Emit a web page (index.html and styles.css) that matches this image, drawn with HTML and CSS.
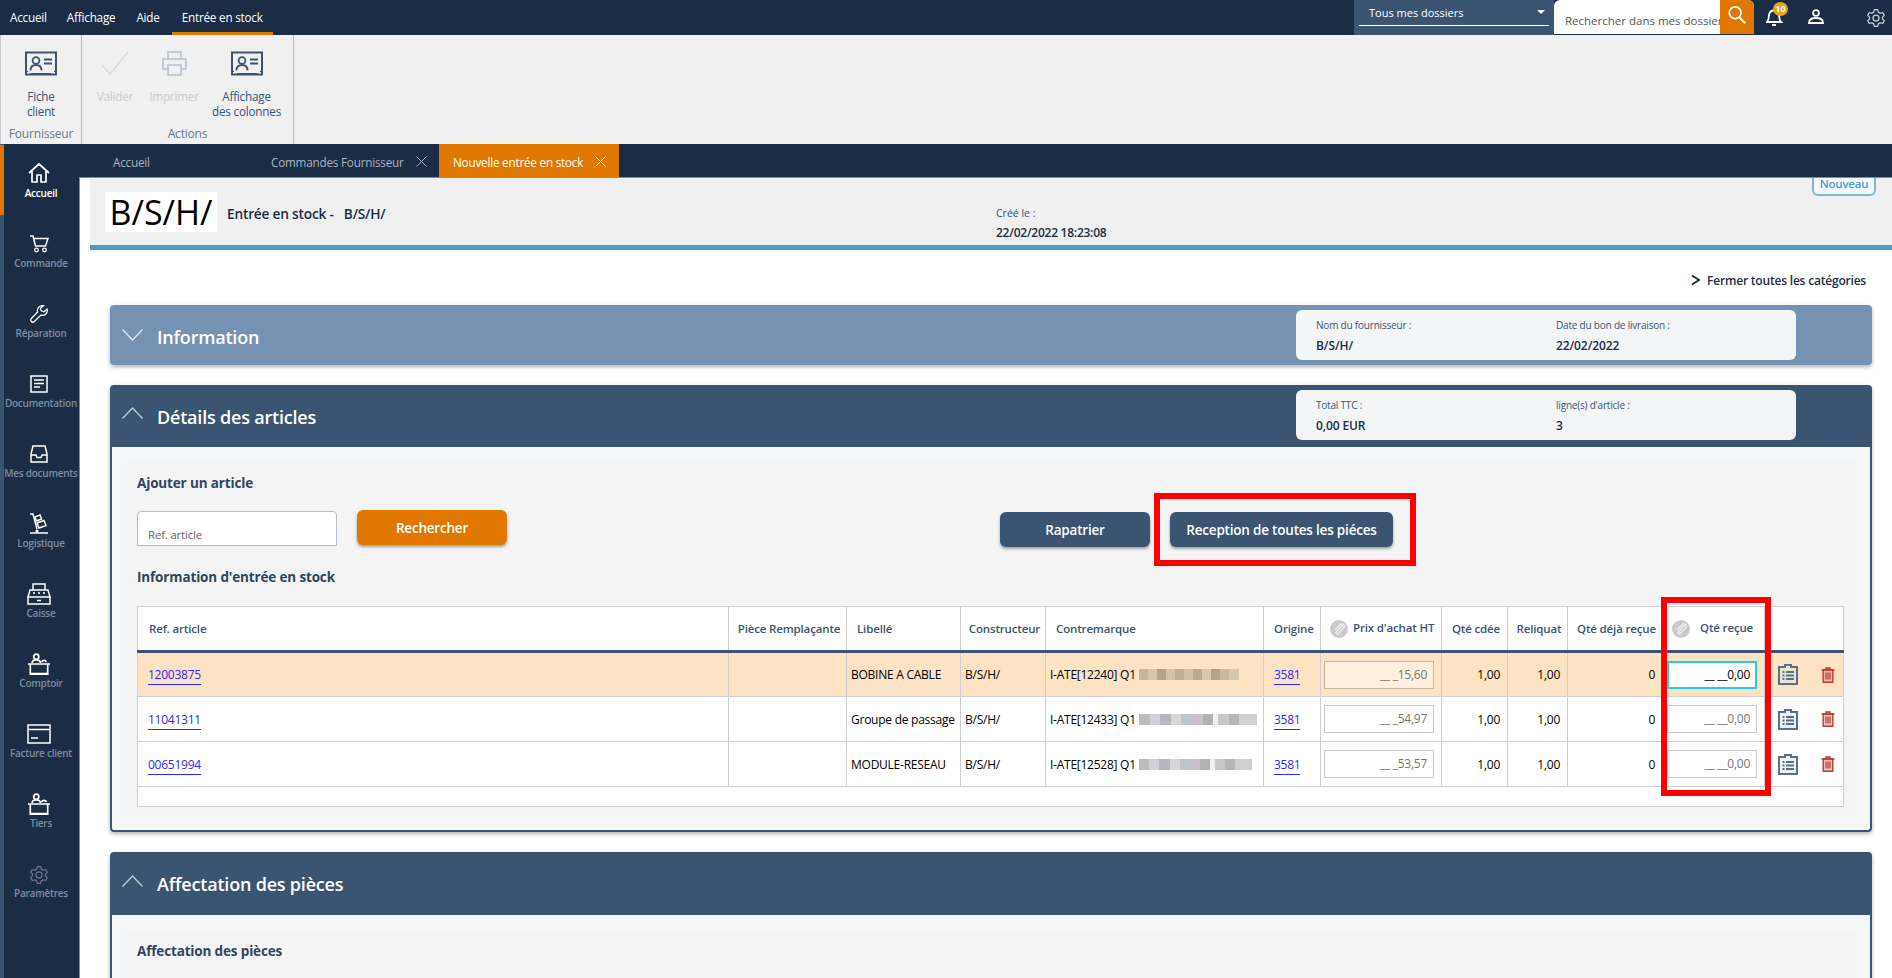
FILE: index.html
```html
<!DOCTYPE html>
<html lang="fr">
<head>
<meta charset="utf-8">
<title>Nouvelle entrée en stock</title>
<link rel="stylesheet" href="styles.css">
</head>
<body>
<svg class="defs" width="0" height="0" aria-hidden="true">
  <symbol id="i-card" viewBox="0 0 32 24"><rect x="1" y="1" width="30" height="22" fill="none" stroke="currentColor" stroke-width="2"/><circle cx="11" cy="9" r="3.4" fill="none" stroke="currentColor" stroke-width="1.8"/><path d="M5.500 19c0-4 2.500-5.500 5.500-5.500s5.500 1.500 5.500 5.500M19 8h8M19 12h8" fill="none" stroke="currentColor" stroke-width="1.800"/><path d="M1 20h2M29 20h2M6 22h20" stroke="currentColor" stroke-width="1"/></symbol>
  <symbol id="i-gear" viewBox="0 0 24 24"><path d="M10 2h4l.7 3 2.300 1.300 3-.9 2 3.500-2.200 2.100v2l2.200 2.100-2 3.500-3-.9-2.300 1.300-.7 3h-4l-.7-3L7 17.700l-3 .9-2-3.500L4.200 13v-2L2 8.900l2-3.500 3 .9L9.300 5z" fill="none" stroke="currentColor" stroke-width="1.500" stroke-linejoin="round"/><circle cx="12" cy="12" r="3.600" fill="none" stroke="currentColor" stroke-width="1.500"/></symbol>
  <symbol id="i-desk" viewBox="0 0 24 24"><circle cx="9" cy="4" r="2.800" fill="none" stroke="currentColor" stroke-width="1.800"/><path d="M4.500 11c0-2.500 2-3.500 4.500-3.500s4.500 1 4.500 3.500M15 10c.3-1.500 1.300-2 2.500-2s2.200.5 2.500 2" fill="none" stroke="currentColor" stroke-width="1.800"/><path d="M0 12h24M2.500 12v11h19V12M2.500 22.500h19" fill="none" stroke="currentColor" stroke-width="1.800"/></symbol>
  <symbol id="i-clip" viewBox="0 0 20 21"><path d="M7 3V1h6v2h6v17H1V3z" fill="#dde3ea" fill-opacity=".55" stroke="currentColor" stroke-width="2"/><path d="M4.500 8h2M8 8h8M4.500 11.500h2M8 11.500h8M4.500 15h2M8 15h8" stroke="currentColor" stroke-width="1.800"/></symbol>
  <symbol id="i-trash" viewBox="0 0 14 16"><path d="M.5 3h13M5 3V1h4v2" fill="none" stroke="currentColor" stroke-width="1.400"/><path d="M2.200 3h9.600v12.300H2.200z" fill="#e0a08f" fill-opacity=".6" stroke="currentColor" stroke-width="1.400"/><path d="M5 5.500v7M7 5.500v7M9 5.500v7" stroke="currentColor" stroke-width="1.200"/></symbol>
  <symbol id="i-paperclip" viewBox="0 0 18 18"><circle cx="9" cy="9" r="9" fill="#c9c9c9"/><path d="M12.500 5.500 6.500 11.800a1.300 1.300 0 0 0 1.900 1.800l5.100-5.500a2.400 2.400 0 0 0-3.400-3.400L5 10" fill="none" stroke="#f2f2f2" stroke-width="1.300"/></symbol>
</svg>

<header class="menubar">
  <nav class="menu">
    <span class="menu-item">Accueil</span>
    <span class="menu-item">Affichage</span>
    <span class="menu-item menu-aide">Aide</span>
    <span class="menu-item menu-active">Entrée en stock</span>
  </nav>
  <div class="top-tools">
    <div class="folder-select"><span class="folder-line"><span>Tous mes dossiers</span><i class="caret"></i></span></div>
    <div class="search"><span class="search-text">Rechercher dans mes dossiers</span><span class="search-btn"><svg width="20" height="20" viewBox="0 0 22 22"><circle cx="9" cy="8.500" r="6.500" fill="none" stroke="#fff" stroke-width="2"/><path d="M13.500 13.500 20 20" stroke="#fff" stroke-width="2.400"/></svg></span></div>
    <span class="tool tool-bell"><svg width="18" height="19" viewBox="0 0 18 19"><path d="M1 15c2-2 1.500-4 2-7 .5-3 2.500-4.500 5-4.500s4.500 1.500 5 4.500c.5 3 0 5 2 7z" fill="none" stroke="#fff" stroke-width="1.800"/><path d="M6 18h4" stroke="#fff" stroke-width="1.800"/></svg><b class="badge">10</b></span>
    <span class="tool tool-user"><svg width="16" height="15" viewBox="0 0 16 15"><circle cx="8" cy="4" r="2.900" fill="none" stroke="#fff" stroke-width="1.800"/><path d="M1 14c0-3.500 3-5 7-5s7 1.500 7 5z" fill="none" stroke="#fff" stroke-width="1.800"/></svg></span>
    <span class="tool tool-gear"><svg width="20" height="20"><use href="#i-gear"/></svg></span>
  </div>
</header>

<section class="ribbon">
  <div class="rib-group rib-g1">
    <div class="rib-buttons">
      <div class="rib-btn"><svg class="rib-icon" width="32" height="25"><use href="#i-card"/></svg><span>Fiche<br>client</span></div>
    </div>
    <div class="rib-name">Fournisseur</div>
  </div>
  <div class="rib-group rib-g2">
    <div class="rib-buttons">
      <div class="rib-btn rib-off rib-b-valider"><svg class="rib-icon" width="28" height="25" viewBox="0 0 28 25"><path d="M1 14l8 9L27 1" fill="none" stroke="#cfe0cf" stroke-width="1.600"/></svg><span>Valider</span></div>
      <div class="rib-btn rib-off rib-b-imprimer"><svg class="rib-icon" width="25" height="25" viewBox="0 0 25 25"><path d="M6 8V1h13v7M6 18H1V8h23v10h-5M6 14h13v10H6z" fill="none" stroke="#c3ccd6" stroke-width="2"/></svg><span>Imprimer</span></div>
      <div class="rib-btn rib-b-aff"><svg class="rib-icon" width="32" height="25"><use href="#i-card"/></svg><span>Affichage<br>des colonnes</span></div>
    </div>
    <div class="rib-name">Actions</div>
  </div>
</section>

<div class="app">
  <aside class="side">
    <div class="side-item side-active"><svg width="22" height="20" viewBox="0 0 22 20"><path d="M1 10 11 1l10 9M4 8v11h5v-7h4v7h5V8" fill="none" stroke="#fff" stroke-width="1.700" stroke-linejoin="round"/></svg><span>Accueil</span></div>
    <div class="side-item"><svg width="20" height="18" viewBox="0 0 20 18"><path d="M1 1h3l2.500 10h10L19 3.500H5" fill="none" stroke="#fff" stroke-width="1.500"/><circle cx="7.500" cy="15" r="1.800" fill="none" stroke="#fff" stroke-width="1.300"/><circle cx="15.500" cy="15" r="1.800" fill="none" stroke="#fff" stroke-width="1.300"/></svg><span>Commande</span></div>
    <div class="side-item"><svg width="18" height="20" viewBox="0 0 20 20"><path d="M19 4.500 15.500 7.500l-3-1-1-3L15 .8a5.500 5.500 0 0 0-6.500 7L1.500 15a2.300 2.300 0 0 0 3.300 3.300l7.300-7a5.500 5.500 0 0 0 6.900-6.800z" fill="none" stroke="#fff" stroke-width="1.400"/></svg><span>Réparation</span></div>
    <div class="side-item"><svg width="18" height="18" viewBox="0 0 18 18"><rect x="1" y="1" width="16" height="16" fill="none" stroke="#fff" stroke-width="1.500"/><path d="M4 5h10M4 8.500h10M4 12h6" stroke="#fff" stroke-width="1.500"/></svg><span>Documentation</span></div>
    <div class="side-item"><svg width="18" height="18" viewBox="0 0 18 18"><path d="M3 1h12l2 8v8H1V9zM1 10h5l1 2.500h4l1-2.500h5" fill="none" stroke="#fff" stroke-width="1.500"/></svg><span>Mes documents</span></div>
    <div class="side-item"><svg width="20" height="22" viewBox="0 0 20 22"><path d="M1 1h3l4 15M1 20h18" fill="none" stroke="#fff" stroke-width="1.500"/><path d="M6 4l5-2 1.500 4-5 2zM8 10l7-2.500 2 5-7 2.500z" fill="none" stroke="#fff" stroke-width="1.500"/><circle cx="8" cy="18" r="1.500" fill="#fff"/></svg><span>Logistique</span></div>
    <div class="side-item side-tight"><svg width="24" height="22" viewBox="0 0 24 22"><path d="M6 7V1h12v6M3 7h18l2 7H1zM1 14h22v7H1zM6 10h2M11 10h2M16 10h2M10 17.500h4" fill="none" stroke="#fff" stroke-width="1.500"/></svg><span>Caisse</span></div>
    <div class="side-item side-tight"><svg width="24" height="24"><use href="#i-desk"/></svg><span>Comptoir</span></div>
    <div class="side-item side-tight"><svg width="24" height="20" viewBox="0 0 24 20"><rect x="1" y="1" width="22" height="18" fill="none" stroke="#fff" stroke-width="1.500"/><path d="M1 5.500h22M4 14h7" stroke="#fff" stroke-width="1.700"/></svg><span>Facture client</span></div>
    <div class="side-item side-tight"><svg width="24" height="24"><use href="#i-desk"/></svg><span>Tiers</span></div>
    <div class="side-item side-dim"><svg width="20" height="22"><use href="#i-gear"/></svg><span>Paramètres</span></div>
  </aside>

  <div class="workspace">
    <div class="tabs">
      <div class="tab tab-home">Accueil</div>
      <div class="tab tab-cmd">Commandes Fournisseur<svg class="tab-x" width="11" height="11" viewBox="0 0 11 11"><path d="M.5.500l10 10M10.500.500l-10 10" stroke="currentColor"/></svg></div>
      <div class="tab tab-on">Nouvelle entrée en stock<svg class="tab-x" width="11" height="11" viewBox="0 0 11 11"><path d="M.5.500l10 10M10.500.500l-10 10" stroke="currentColor"/></svg></div>
    </div>

    <main class="content">
      <div class="doc-head">
        <div class="logo">B/S/H/</div>
        <div class="doc-title">Entrée en stock -&nbsp;&nbsp; B/S/H/</div>
        <div class="doc-date"><small>Créé le :</small><strong>22/02/2022 18:23:08</strong></div>
        <span class="new-btn">Nouveau</span>
      </div>

      <div class="close-all"><svg width="9" height="10" viewBox="0 0 9 10"><path d="M1 .500 8 5 1 9.500" fill="none" stroke="#1b2d45" stroke-width="1.800"/></svg>Fermer toutes les catégories</div>

      <section class="panel panel-closed">
        <div class="panel-head">
          <svg class="chev" width="21" height="12" viewBox="0 0 21 12"><path d="M.5.500 10.500 11 20.500.500" fill="none" stroke="#dfe6ee" stroke-width="1.300"/></svg>
          <h2>Information</h2>
          <div class="summary">
            <div class="sum-col"><small>Nom du fournisseur :</small><strong>B/S/H/</strong></div>
            <div class="sum-col"><small>Date du bon de livraison :</small><strong>22/02/2022</strong></div>
          </div>
        </div>
      </section>

      <section class="panel">
        <div class="panel-head panel-head-details">
          <svg class="chev chev-up" width="21" height="12" viewBox="0 0 21 12"><path d="M.5 11.500 10.500 1 20.500 11.500" fill="none" stroke="#c3ccd7" stroke-width="1.300"/></svg>
          <h2>Détails des articles</h2>
          <div class="summary">
            <div class="sum-col"><small>Total TTC :</small><strong>0,00 EUR</strong></div>
            <div class="sum-col"><small>ligne(s) d'article :</small><strong>3</strong></div>
          </div>
        </div>
        <div class="panel-body">
          <div class="inner">
            <h3>Ajouter un article</h3>
            <div class="add-row">
              <div class="ref-input">Ref. article</div>
              <button class="btn btn-orange">Rechercher</button>
              <button class="btn btn-blue btn-rap">Rapatrier</button>
              <button class="btn btn-blue btn-rec">Reception de toutes les piéces<span class="redbox redbox-btn"></span></button>
            </div>
            <h3 class="h-stock">Information d'entrée en stock</h3>
            <div class="table-wrap">
              <table class="grid">
                <colgroup><col class="c1"><col class="c2"><col class="c3"><col class="c4"><col class="c5"><col class="c6"><col class="c7"><col class="c8"><col class="c9"><col class="c10"><col class="c11"><col class="c12"></colgroup>
                <thead><tr>
                  <th>Ref. article</th><th>Pièce Remplaçante</th><th>Libellé</th><th>Constructeur</th><th>Contremarque</th><th>Origine</th>
                  <th class="th-i"><svg width="18" height="18"><use href="#i-paperclip"/></svg>Prix d'achat HT</th>
                  <th>Qté cdée</th><th>Reliquat</th><th>Qté déjà reçue</th>
                  <th class="th-i th-q"><svg width="18" height="18"><use href="#i-paperclip"/></svg>Qté reçue</th><th></th>
                </tr></thead>
                <tbody>
                  <tr class="row-on">
                    <td><a>12003875</a></td><td></td><td>BOBINE A CABLE</td><td>B/S/H/</td>
                    <td>I-ATE[12240] Q1 <i class="blur blur1"></i></td><td><a>3581</a></td>
                    <td class="cell-in"><span class="num">__ _15,60</span></td><td class="r">1,00</td><td class="r">1,00</td><td class="r">0</td>
                    <td class="cell-in"><span class="num num-q num-focus">__ __0,00</span></td>
                    <td class="acts"><svg class="clip" width="20" height="21"><use href="#i-clip"/></svg><svg class="trash" width="14" height="16"><use href="#i-trash"/></svg></td>
                  </tr>
                  <tr>
                    <td><a>11041311</a></td><td></td><td>Groupe de passage</td><td>B/S/H/</td>
                    <td>I-ATE[12433] Q1 <i class="blur blur2"></i></td><td><a>3581</a></td>
                    <td class="cell-in"><span class="num">__ _54,97</span></td><td class="r">1,00</td><td class="r">1,00</td><td class="r">0</td>
                    <td class="cell-in"><span class="num num-q">__ __0,00</span></td>
                    <td class="acts"><svg class="clip" width="20" height="21"><use href="#i-clip"/></svg><svg class="trash" width="14" height="16"><use href="#i-trash"/></svg></td>
                  </tr>
                  <tr>
                    <td><a>00651994</a></td><td></td><td>MODULE-RESEAU</td><td>B/S/H/</td>
                    <td>I-ATE[12528] Q1 <i class="blur blur3"></i></td><td><a>3581</a></td>
                    <td class="cell-in"><span class="num">__ _53,57</span></td><td class="r">1,00</td><td class="r">1,00</td><td class="r">0</td>
                    <td class="cell-in"><span class="num num-q">__ __0,00</span></td>
                    <td class="acts"><svg class="clip" width="20" height="21"><use href="#i-clip"/></svg><svg class="trash" width="14" height="16"><use href="#i-trash"/></svg></td>
                  </tr>
                  <tr class="row-empty"><td colspan="12"></td></tr>
                </tbody>
              </table>
              <span class="redbox redbox-col"></span>
            </div>
          </div>
        </div>
      </section>

      <section class="panel panel-last">
        <div class="panel-head">
          <svg class="chev chev-up" width="21" height="12" viewBox="0 0 21 12"><path d="M.5 11.500 10.500 1 20.500 11.500" fill="none" stroke="#c3ccd7" stroke-width="1.300"/></svg>
          <h2>Affectation des pièces</h2>
        </div>
        <div class="panel-body">
          <div class="inner"><h3>Affectation des pièces</h3></div>
        </div>
      </section>
    </main>
  </div>
</div>
</body>
</html>
```
FILE: styles.css
```css
* { box-sizing: border-box; }
html, body { margin: 0; height: 100%; overflow: hidden; }
body { width: 1892px; height: 978px; font-family: "Open Sans", "Noto Sans", sans-serif; font-size: 12px; color: #1b2d45; background: #1b2d45; display: flex; flex-direction: column; }
.defs { position: absolute; }

.menubar { height: 35px; background: #1b2d45; display: flex; justify-content: space-between; color: #fff; flex: none; }
.menu { display: flex; }
.menu-item { padding: 0 10px; line-height: 34px; font-size: 11.700px; letter-spacing: -.2px; }
.menu-aide { margin-left: 1px; }
.menu-active { margin-left: 2px; border-bottom: 3px solid #e07800; height: 35px; }
.top-tools { display: flex; align-items: stretch; }
.folder-select { width: 200px; background: #3a5472; padding: 0 5px; }
.folder-line { display: flex; justify-content: space-between; align-items: center; height: 25.500px; border-bottom: 1px solid #fff; padding: 0 4px 0 10px; font-size: 11px; }
.caret { width: 0; height: 0; border: 4px solid transparent; border-top-color: #fff; margin-top: 4px; }
.search { width: 200px; height: 33.500px; display: flex; background: #fff; border-radius: 6px 6px 0 0; overflow: hidden; }
.search-text { flex: 1; color: #555; font-size: 11.500px; padding: 13px 0 0 11px; overflow: hidden; white-space: nowrap; }
.search-btn { width: 34px; background: #e07800; flex: none; padding: 5px 0 0 7px; }
.tool { position: relative; display: block; }
.tool-bell { margin-left: 12px; width: 42px; padding-top: 7px; }
.tool-user { width: 58px; padding-top: 9px; }
.tool-gear { width: 26px; padding-top: 8px; color: #c9d0d8; }
.badge { position: absolute; left: 7px; top: 2px; width: 15px; height: 14px; border-radius: 50%; background: #e9a21c; color: #fff; font-size: 9px; line-height: 14px; text-align: center; font-weight: 700; }

.ribbon { height: 109px; flex: none; background: #f0f0f0; display: flex; color: #3a5472; }
.rib-group { border-right: 1px solid #bdbdbd; display: flex; flex-direction: column; height: 109px; }
.rib-g1 { width: 82px; border-left: 1px solid #ccc; }
.rib-g2 { width: 212px; }
.rib-buttons { display: flex; flex: 1; }
.rib-btn { display: flex; flex-direction: column; align-items: center; text-align: center; font-size: 11.700px; line-height: 14.500px; flex: 1; padding-top: 16px; letter-spacing: -.2px; }
.rib-icon { margin-bottom: 13px; flex: none; }
.rib-off { color: #c7ced6; }
.rib-b-valider { flex: 0 0 66px; }
.rib-b-imprimer { flex: 0 0 52px; }
.rib-name { font-size: 12px; text-align: center; color: #63788f; height: 24px; line-height: 27px; letter-spacing: -.2px; }

.app { flex: 1; display: flex; min-height: 0; }
.side { width: 79px; flex: none; background: #1b2d45; border-left: 4px solid #3a5472; padding-top: 1px; }
.side-item { height: 70px; margin-left: -4px; padding: 17px 1px 0 0; border-left: 4px solid transparent; display: flex; flex-direction: column; align-items: center; color: #7d8da1; font-size: 10px; font-weight: 600; letter-spacing: -.25px; white-space: nowrap; }
.side-item svg { height: 22px; flex: none; margin: 1px 4px 1px 0; color: #fff; }
.side-active svg { margin: 0 4px 2px 0; }
.side-tight svg { margin: 1px 4px 1px 0; }
.side-active { border-left-color: #e07800; color: #fff; }
.side-dim svg { margin: 2px 4px 0 0; opacity: .55; color: #a9b6c5; }

.workspace { flex: 1; min-width: 0; display: flex; flex-direction: column; }
.tabs { height: 33px; flex: none; display: flex; font-size: 11.700px; letter-spacing: -.2px; color: #aab4c0; padding-top: 2px; }
.tab { display: flex; align-items: center; height: 31px; }
.tab-home { padding-left: 34px; width: 179px; }
.tab-cmd { width: 181px; padding-left: 13px; }
.tab-on { width: 180px; height: 33px; margin-top: -2px; padding-top: 2px; background: #e07800; color: #fff; padding-left: 14px; }
.tab-x { margin-left: 12px; }

.content { flex: 1; min-height: 0; overflow: hidden; background: #fff; border-left: 1px solid #e07800; border-top: 1px solid #e07800; }
.doc-head { margin-left: 10px; height: 72px; background: #f0f0f0; border-bottom: 5px solid #4a9ccb; position: relative; display: flex; padding: 14px 0 0 15px; }
.logo { width: 112px; height: 40px; background: #fff; color: #000; font: 34px/41px "Open Sans", sans-serif; text-align: center; flex: none; }
.doc-title { margin-left: 10px; line-height: 44px; font-size: 13.700px; font-weight: 600; letter-spacing: -.2px; width: 769px; flex: none; }
.doc-date small { display: block; font-size: 10.500px; color: #3a5472; line-height: 12px; margin-top: 15px; }
.doc-date strong { display: block; font-size: 12px; font-weight: 600; line-height: 14px; margin-top: 7px; letter-spacing: -.25px; }
.new-btn { position: absolute; right: 16px; top: -5px; width: 64px; height: 23px; border: 2px solid #7cb8d9; border-radius: 0 0 6px 6px; background: #f4f8fb; color: #4a9ccb; font-size: 11.500px; font-weight: 600; line-height: 17px; text-align: center; letter-spacing: -.2px; }

.close-all { height: 55px; padding: 5px 26px 0 0; display: flex; justify-content: flex-end; align-items: center; gap: 7px; font-size: 12px; font-weight: 600; letter-spacing: -.2px; }

.panel { margin: 0 20px 20px 30px; border-radius: 4px; box-shadow: 0 2px 4px rgba(0,0,0,.3); }
.panel-head { height: 62px; background: #3a5472; display: flex; align-items: center; color: #fff; padding-left: 12px; border-radius: 4px 4px 0 0; position: relative; }
.panel-closed .panel-head { background: #7592b2; height: 60px; border-radius: 4px; }
.panel-closed h2 { padding-top: 3px; }
.panel-head-details h2 { padding-top: 2px; }
.chev { margin-right: 14px; flex: none; }
.chev-up { margin-top: -6px; }
.panel-head h2 { margin: 0; font-size: 18px; font-weight: 600; letter-spacing: -.2px; }
.summary { position: absolute; left: 1186px; top: 5px; width: 500px; height: 50px; background: #f4f5f6; border-radius: 6px; display: flex; padding: 8px 0 0 20px; color: #000; }
.sum-col { width: 244px; }
.sum-col small { display: block; font-size: 10px; color: #3a5472; line-height: 14px; letter-spacing: -.2px; }
.sum-col strong { display: block; font-size: 12px; font-weight: 600; line-height: 14px; margin-top: 7px; color: #1b2d45; letter-spacing: -.1px; }

.panel-body { background: #f5f6f8; border: 2px solid #3a5472; border-top: 0; border-radius: 0 0 4px 4px; padding: 15px 14px 15px 15px; height: 385px; }
.inner { background: #f4f4f4; height: 100%; padding: 12px 10px 0 10px; }
.inner h3 { margin: 0; font-size: 13.500px; font-weight: 700; color: #2e4560; line-height: 18px; letter-spacing: -.15px; }
.add-row { display: flex; align-items: flex-start; margin-top: 18px; height: 42px; }
.ref-input { width: 200px; height: 35px; background: #fff; border: 1px solid #b4bcc8; border-radius: 4px 4px 0 0; color: #666; font-size: 11.500px; padding: 15px 0 0 10px; margin-top: 1px; letter-spacing: -.2px; }
.btn { border: 0; height: 35px; border-radius: 6px; color: #fff; font: 600 13.500px "Open Sans", sans-serif; box-shadow: 0 2px 3px rgba(0,0,0,.35); letter-spacing: -.2px; position: relative; }
.btn-orange { width: 150px; margin-left: 20px; background: #e07800; }
.btn-blue { background: #3a5472; margin-top: 2px; }
.btn-rap { width: 150px; margin-left: 493px; }
.btn-rec { width: 223px; margin-left: 20px; }
.redbox { position: absolute; border: 6px solid #f00; pointer-events: none; }
.redbox-btn { left: -16px; top: -19px; width: 262px; height: 73px; }
.inner .h-stock { margin-top: 16px; }

.table-wrap { position: relative; margin-top: 20px; width: 1706px; }
.redbox-col { left: 1524px; top: -9px; width: 110px; height: 199px; }
.grid { border-collapse: collapse; table-layout: fixed; width: 1706px; background: #fff; font-size: 12px; color: #1b2d45; letter-spacing: -.25px; }
.c1 { width: 591px; } .c2 { width: 118px; } .c3 { width: 114px; } .c4 { width: 85px; } .c5 { width: 218px; } .c6 { width: 57px; } .c7 { width: 121px; } .c8 { width: 66px; } .c9 { width: 60px; } .c10 { width: 95px; } .c11 { width: 102px; } .c12 { width: 79px; }
.grid th, .grid td { border: 1px solid #cfcfcf; white-space: nowrap; overflow: hidden; }
.grid th { height: 45px; border-bottom: 3px solid #3a5472; font-size: 11.500px; font-weight: 600; color: #3a5472; text-align: left; padding: 0 4px 0 10px; letter-spacing: -.15px; }
.grid th:first-child { padding-left: 11px; }
.grid th:nth-child(2), .grid th:nth-child(4), .grid th:nth-child(8), .grid th:nth-child(9), .grid th:nth-child(10) { padding-left: 5px; padding-right: 2px; text-align: center; }
.grid th:last-child { border-left: 0; }
.th-i svg { vertical-align: middle; margin-right: 5px; }
.grid .th-i { padding-left: 9px; padding-right: 0; }
.th-q svg { margin-right: 10px; }
.grid td { height: 45px; padding: 0 4px 0 10px; color: #000; }
.grid td:nth-child(3), .grid td:nth-child(4), .grid td:nth-child(5) { padding-left: 4px; }
.grid tbody tr:not(.row-empty) td:last-child { border-left: 0; border-right: 1px solid #cfcfcf; }
.row-on td { background: #fde3c3; }
.grid .row-empty td { height: 20px; background: #fff; }
.grid a { color: #2a2aff; border-bottom: 1px solid #2a2aff; padding-bottom: 1px; }
.blur { display: inline-block; height: 11px; vertical-align: -1px; background: linear-gradient(90deg, #bdbdbd 0 9%, #cfd1d4 9% 18%, #b5b9bd 18% 27%, #d6d6d6 27% 36%, #bcc6cc 36% 45%, #c9c3c9 45% 54%, #b2b2b2 54% 63%, #f0f0f0 63% 67%, #c8c8c8 67% 76%, #b6b6b6 76% 85%, #d0d0d0 85% 100%); }
.blur1 { width: 100px; background: linear-gradient(90deg, #c9b39c 0 9%, #d9c4a9 9% 18%, #b8a389 18% 27%, #d6c2a8 27% 36%, #c3ad92 36% 45%, #d3bfa6 45% 54%, #bea88e 54% 63%, #d9c6ac 63% 72%, #b7a288 72% 81%, #cdb89e 81% 90%, #d8c5ab 90% 100%); }
.blur2 { width: 118px; }
.blur3 { width: 113px; }
.grid .r { text-align: right; padding-right: 7px; }
.grid .cell-in { padding: 0 7px 0 3px; }
.num { display: block; height: 28px; border: 1px solid #c8c8c8; color: #777; text-align: right; line-height: 26px; padding-right: 6px; background: #fff; }
.row-on .num { background: #feefdf; border-color: #c9b49c; }
.row-on .num-focus { background: #fff; border: 2px solid #22ccee; color: #000; line-height: 24px; padding-right: 5px; }
.num-q { margin-left: 1px; }
.grid .acts { padding: 0 0 0 13px; }
.acts svg { vertical-align: middle; }
.clip { color: #5a7088; }
.trash { color: #b83a2e; margin-left: 23px; }

.panel-last { margin-bottom: 0; }
.panel-last .panel-head { height: 63px; }
.panel-last .panel-body { height: 200px; }
.panel-last .inner { padding-top: 12px; }
```
